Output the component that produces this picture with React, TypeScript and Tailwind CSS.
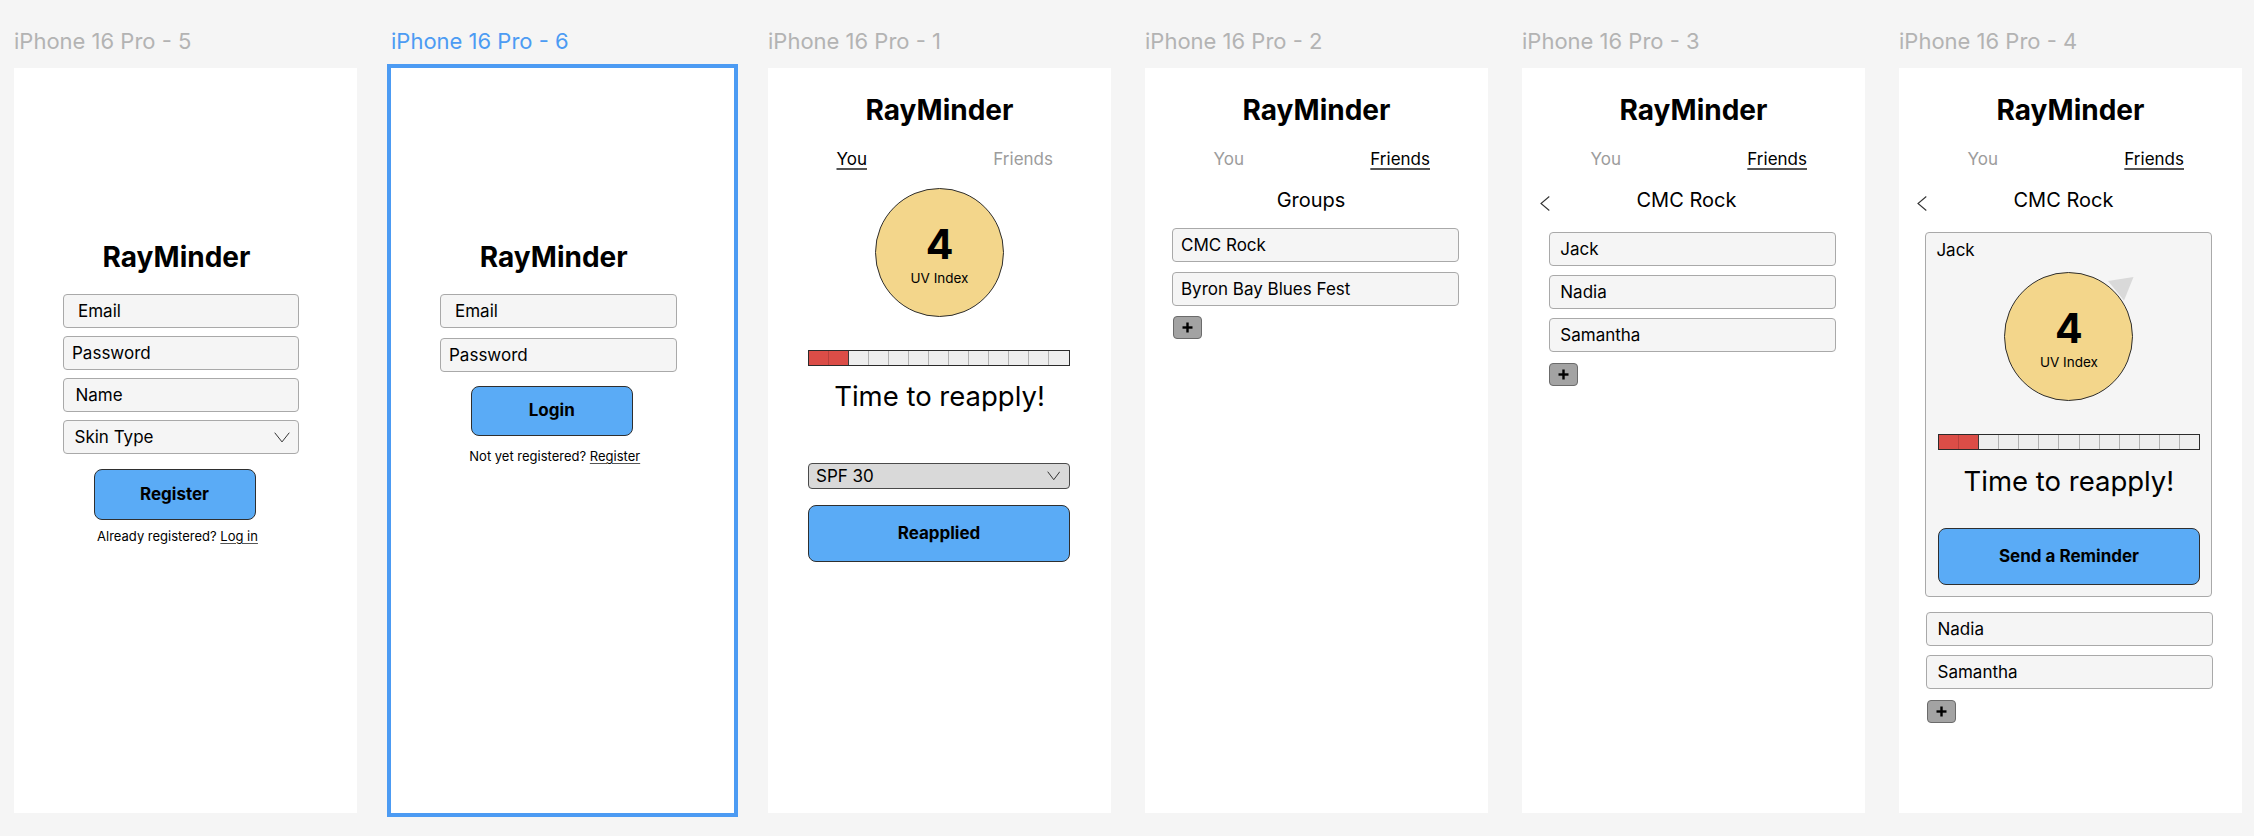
import React from "react";

const BLUE_BTN = "bg-[#5aabf6]";

function Label({ text, active }: { text: string; active?: boolean }) {
  return (
    <div
      className={
        active
          ? "h-[28px] leading-[28px] text-[22px] text-[#4c9bf3] whitespace-nowrap"
          : "h-[28px] leading-[28px] text-[22px] text-[#b3b3b3] whitespace-nowrap"
      }
    >
      {text}
    </div>
  );
}

function Field({
  text,
  className,
  children,
}: {
  text: string;
  className: string;
  children?: React.ReactNode;
}) {
  return (
    <div
      className={
        "h-[34px] rounded-[4px] border border-[#a9a9a9] bg-[#f5f5f5] flex items-center text-[17px] leading-[20px] text-black " +
        className
      }
    >
      <span className="flex-1 whitespace-nowrap">{text}</span>
      {children}
    </div>
  );
}

function Chevron({ w = 16, h = 10 }: { w?: number; h?: number }) {
  return (
    <svg width={w} height={h} viewBox={`0 0 ${w} ${h}`} fill="none">
      <polyline
        points={`0.7,0.7 ${w / 2},${h - 0.7} ${w - 0.7},0.7`}
        stroke="#333"
        strokeWidth="1"
      />
    </svg>
  );
}

function BackChevron() {
  return (
    <svg width="10" height="15" viewBox="0 0 10 15" fill="none" className="mt-[8px] shrink-0">
      <polyline points="9.3,0.5 1,7.5 9.3,14.5" stroke="#333" strokeWidth="1.1" />
    </svg>
  );
}

function PlusBtn({ className }: { className: string }) {
  return (
    <div
      className={
        "w-[29px] h-[23px] rounded-[4px] bg-[#a3a3a3] border border-[#6b6b6b] flex items-center justify-center " +
        className
      }
    >
      <svg width="11" height="11" viewBox="0 0 11 11">
        <line x1="5.5" y1="0.5" x2="5.5" y2="10.5" stroke="#000" strokeWidth="2.4" />
        <line x1="0.5" y1="5.5" x2="10.5" y2="5.5" stroke="#000" strokeWidth="2.4" />
      </svg>
    </div>
  );
}

function Title({ className = "" }: { className?: string }) {
  return (
    <div className={"text-[28px] leading-[34px] font-bold text-black text-center whitespace-nowrap " + className}>
      RayMinder
    </div>
  );
}

function Tabs({ you }: { you: boolean }) {
  const on = "text-black underline decoration-[1.5px] decoration-[#555] underline-offset-[3px]";
  const off = "text-[#9c9c9c]";
  return (
    <div className="mt-[22px] flex justify-between pl-[68.5px] pr-[58px] text-[17px] leading-[20px]">
      <span className={you ? on : off}>You</span>
      <span className={you ? off : on}>Friends</span>
    </div>
  );
}

function UVCircle({ triangle }: { triangle?: boolean }) {
  return (
    <div className="relative w-[129px] h-[129px] self-center shrink-0">
      {triangle && (
        <svg className="absolute left-0 top-0 overflow-visible" width="129" height="129" viewBox="0 0 129 129">
          <polygon points="104,9 129.5,5 120,28.5" fill="#d9d9d9" />
        </svg>
      )}
      <div className="relative w-[129px] h-[129px] rounded-full bg-[#f3d68b] border border-[#2e2e2e] flex flex-col items-center">
        <div className="mt-[35px] text-[41px] leading-[41px] font-bold text-black">4</div>
        <div className="mt-[4.5px] text-[13.5px] leading-[16px] text-black">UV Index</div>
      </div>
    </div>
  );
}

function Bar({ className }: { className: string }) {
  const segs = Array.from({ length: 13 }, (_, i) => i);
  return (
    <div className={"flex h-[16px] border-[1.5px] border-[#2b2b2b] bg-[#eeeeee] " + className}>
      {segs.map((i) =>
        i < 2 ? (
          <div
            key={i}
            className={
              i === 0
                ? "flex-1 bg-[#db4d47] border-r border-[#b9413c]"
                : "flex-1 bg-[#db4d47] border-r-[1.5px] border-[#3a3a3a]"
            }
          />
        ) : (
          <div
            key={i}
            className={i === 12 ? "flex-1" : "flex-1 border-r border-[#b3b3b3]"}
          />
        )
      )}
    </div>
  );
}

function BigText({ className }: { className: string }) {
  return (
    <div className={"text-[27.5px] leading-[34px] text-black text-center whitespace-nowrap " + className}>
      Time to reapply!
    </div>
  );
}

function BlueButton({ text, className }: { text: string; className: string }) {
  return (
    <div
      className={
        BLUE_BTN +
        " rounded-[8px] border-[1.5px] border-[#2f2f2f] flex items-center justify-center text-[17px] font-bold text-black whitespace-nowrap " +
        className
      }
    >
      {text}
    </div>
  );
}

function Column({
  label,
  active,
  children,
}: {
  label: string;
  active?: boolean;
  children: React.ReactNode;
}) {
  return (
    <div className="flex flex-col pt-[27px] w-[343px] shrink-0">
      <Label text={label} active={active} />
      <div
        className={
          active
            ? "mt-[13px] w-[343px] h-[745px] bg-white flex flex-col ring-4 ring-[#4c9bf3]"
            : "mt-[13px] w-[343px] h-[745px] bg-white flex flex-col"
        }
      >
        {children}
      </div>
    </div>
  );
}

function SubHeader({ text }: { text: string }) {
  return (
    <div className="mt-[19px] flex items-start pl-[18px] h-[24px]">
      <BackChevron />
      <div className="ml-[86.5px] text-[20px] leading-[24px] text-black whitespace-nowrap">{text}</div>
    </div>
  );
}

export default function App() {
  return (
    <div className="w-[2254px] h-[836px] bg-[#f5f5f5] overflow-hidden font-[Inter,sans-serif]">
      <div className="flex gap-[34px] pl-[14px]">
        {/* Frame 5: Register */}
        <Column label="iPhone 16 Pro - 5">
          <div className="flex flex-col items-center pt-[172px] ml-[49px] w-[236px]">
            <Title className="mr-[9px]" />
            <div className="mt-[20px] flex flex-col gap-[8px] w-[236px]">
              <Field text="Email" className="pl-[14px]" />
              <Field text="Password" className="pl-[8px]" />
              <Field text="Name" className="pl-[11.5px]" />
              <Field text="Skin Type" className="pl-[10.5px] pr-[8.5px]">
                <Chevron w={16} h={10.6} />
              </Field>
            </div>
            <BlueButton text="Register" className="mt-[15px] w-[162px] h-[51px] mr-[13px]" />
            <div className="mt-[8px] mr-[7px] text-[13px] leading-[16px] text-black whitespace-nowrap">
              Already registered?{" "}
              <span className="underline decoration-[#555] underline-offset-[2px]">Log in</span>
            </div>
          </div>
        </Column>

        {/* Frame 6: Login (selected) */}
        <Column label="iPhone 16 Pro - 6" active>
          <div className="flex flex-col items-center pt-[172px] ml-[49px] w-[236.5px]">
            <Title className="mr-[9px]" />
            <div className="mt-[20px] flex flex-col gap-[10.3px] w-[236.5px]">
              <Field text="Email" className="pl-[14px]" />
              <Field text="Password" className="pl-[8px]" />
            </div>
            <BlueButton text="Login" className="mt-[13.6px] w-[161.5px] h-[50px] mr-[13px]" />
            <div className="mt-[12.4px] mr-[7px] text-[13px] leading-[16px] text-black whitespace-nowrap">
              Not yet registered?{" "}
              <span className="underline decoration-[#555] underline-offset-[2px]">Register</span>
            </div>
          </div>
        </Column>

        {/* Frame 1: You */}
        <Column label="iPhone 16 Pro - 1">
          <div className="flex flex-col pt-[25px]">
            <Title />
            <Tabs you />
            <div className="mt-[19px] flex flex-col">
              <UVCircle />
            </div>
            <Bar className="mt-[33.4px] ml-[40px] w-[261.5px]" />
            <BigText className="mt-[13px]" />
            <div className="mt-[49.6px] ml-[40px] w-[262px] h-[26px] rounded-[4px] border border-[#4a4a4a] bg-[#d9d9d9] flex items-center pl-[7px] pr-[9px] text-[17px] leading-[20px] text-black">
              <span className="flex-1">SPF 30</span>
              <Chevron w={13.5} h={9.4} />
            </div>
            <BlueButton text="Reapplied" className="mt-[16px] ml-[40px] w-[262px] h-[56.7px]" />
          </div>
        </Column>

        {/* Frame 2: Groups */}
        <Column label="iPhone 16 Pro - 2">
          <div className="flex flex-col pt-[25px]">
            <Title />
            <Tabs you={false} />
            <div className="mt-[19px] mr-[11px] text-center text-[20px] leading-[24px] text-black">Groups</div>
            <div className="mt-[16px] ml-[27px] w-[286.5px] flex flex-col gap-[10px]">
              <Field text="CMC Rock" className="pl-[8px]" />
              <Field text="Byron Bay Blues Fest" className="pl-[8px]" />
            </div>
            <PlusBtn className="mt-[10px] ml-[27.5px]" />
          </div>
        </Column>

        {/* Frame 3: CMC Rock */}
        <Column label="iPhone 16 Pro - 3">
          <div className="flex flex-col pt-[25px]">
            <Title />
            <Tabs you={false} />
            <SubHeader text="CMC Rock" />
            <div className="mt-[19.5px] ml-[26.8px] w-[287px] flex flex-col gap-[9.4px]">
              <Field text="Jack" className="pl-[10.5px]" />
              <Field text="Nadia" className="pl-[10.5px]" />
              <Field text="Samantha" className="pl-[10.5px]" />
            </div>
            <PlusBtn className="mt-[11px] ml-[26.8px]" />
          </div>
        </Column>

        {/* Frame 4: Jack expanded */}
        <Column label="iPhone 16 Pro - 4">
          <div className="flex flex-col pt-[25px]">
            <Title />
            <Tabs you={false} />
            <SubHeader text="CMC Rock" />
            <div className="mt-[19.5px] ml-[26.4px] w-[287px] rounded-[4px] border border-[#a9a9a9] bg-[#f5f5f5] flex flex-col pb-[11.5px]">
              <div className="mt-[7px] pl-[10px] text-[17px] leading-[20px] text-black">Jack</div>
              <div className="mt-[12.5px] flex flex-col">
                <UVCircle triangle />
              </div>
              <Bar className="mt-[32.6px] ml-[11.6px] w-[262px]" />
              <BigText className="mt-[14px]" />
              <BlueButton text="Send a Reminder" className="mt-[30.3px] ml-[11.6px] w-[262px] h-[57px]" />
            </div>
            <div className="mt-[14.7px] ml-[27px] w-[286.5px] flex flex-col gap-[9.4px]">
              <Field text="Nadia" className="pl-[10.5px]" />
              <Field text="Samantha" className="pl-[10.5px]" />
            </div>
            <PlusBtn className="mt-[11px] ml-[28px]" />
          </div>
        </Column>
      </div>
    </div>
  );
}
